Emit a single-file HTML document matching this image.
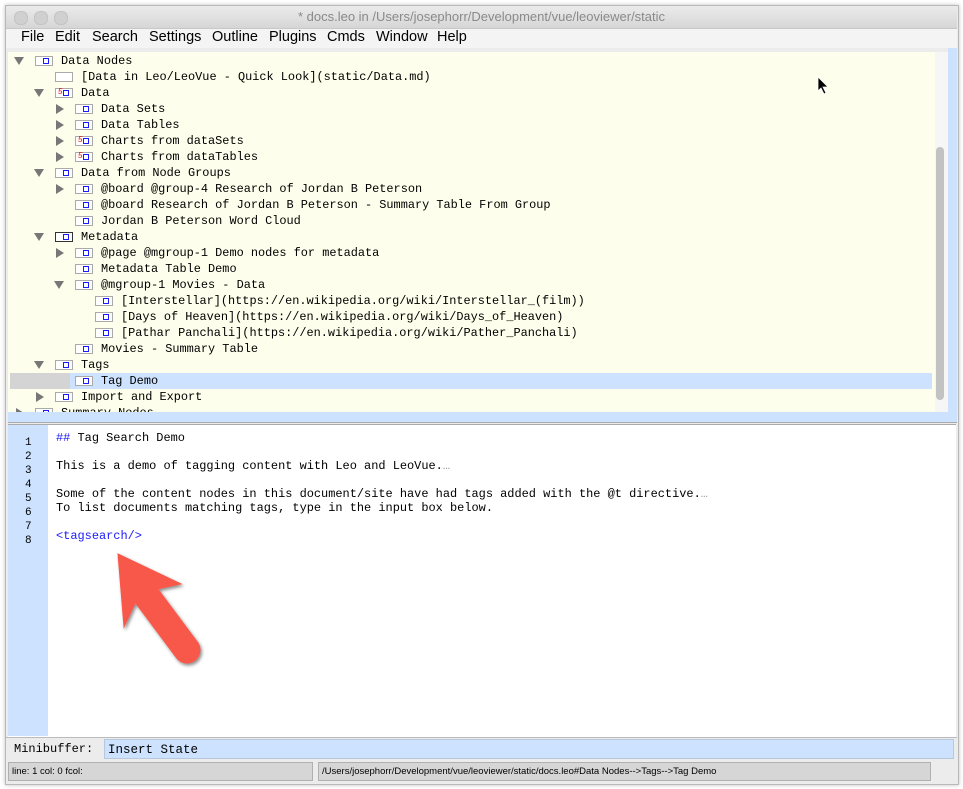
<!DOCTYPE html>
<html><head><meta charset="utf-8"><style>
body{margin:0;width:963px;height:789px;background:#fff;position:relative;overflow:hidden;font-family:"Liberation Sans",sans-serif}
.a{position:absolute}
.win{left:5px;top:5px;width:952px;height:778px;border:1px solid #b8b8b8;background:#ececec;box-shadow:0 0 4px rgba(0,0,0,.25)}
.title{left:6px;top:6px;width:951px;height:22px;background:linear-gradient(#ebebeb,#d6d6d6);border-bottom:1px solid #c8c8c8;text-align:center;font-size:13px;line-height:22px;color:#8a8a8a}
.dot{width:12px;height:12px;border-radius:6px;background:#d0d0d0;border:1px solid #c4c4c4;top:11px}
.menu{left:6px;top:29px;width:951px;height:19px;background:#f4f4f4;font-size:14.5px;line-height:17px}
.menu span{position:absolute;top:0}
.tree{left:8px;top:52px;width:940px;height:360px;background:#fefeec;overflow:hidden}
.row{position:absolute;left:0;height:16px;width:930px;font-family:"Liberation Mono",monospace;font-size:11.9px;line-height:17px;color:#000}
.row .t{position:absolute;white-space:pre}
.tri{position:absolute;width:0;height:0}
.dn{border-left:5px solid transparent;border-right:5px solid transparent;border-top:8px solid #777;top:4px}
.rt{border-top:5px solid transparent;border-bottom:5px solid transparent;border-left:8px solid #777;top:3px}
.ic{position:absolute;top:3px;width:16px;height:8px;border:1px solid #aaa;background:#fff}
.ic.dk{border-color:#333}
.ic i{position:absolute;right:3px;top:1px;width:4px;height:4px;border:1px solid #1a1aff}
.ic b{position:absolute;left:2px;top:-2px;font-size:8px;line-height:10px;color:#e00;font-weight:normal;font-family:"Liberation Sans",sans-serif;font-style:italic}
.body{left:8px;top:424px;width:948px;height:312px;background:#fff;border-top:1px solid #aaa}
.gut{left:8px;top:425px;width:40px;height:311px;background:#cce2fe}
.ln{position:absolute;left:25px;font-family:"Liberation Mono",monospace;font-size:11px}
.bt{position:absolute;left:56px;font-family:"Liberation Mono",monospace;font-size:11.95px;white-space:pre;line-height:14px}
</style></head><body>
<div class="a win"></div>
<div class="a title">* docs.leo in /Users/josephorr/Development/vue/leoviewer/static</div>
<div class="a dot" style="left:14px"></div><div class="a dot" style="left:34px"></div><div class="a dot" style="left:54px"></div>
<div class="a menu">
<span style="left:15px">File</span><span style="left:49px">Edit</span><span style="left:86px">Search</span><span style="left:143px">Settings</span><span style="left:206px">Outline</span><span style="left:263px">Plugins</span><span style="left:321px">Cmds</span><span style="left:370px">Window</span><span style="left:431px">Help</span>
</div>
<div class="a" style="left:948px;top:48px;width:9px;height:374px;background:#cce2fe"></div>
<div class="a" style="left:8px;top:412px;width:949px;height:10px;background:#cce2fe;border-bottom:1px solid #aaa"></div>
<div class="a tree" id="tree">
<div class="a" style="left:927px;top:0;width:14px;height:360px;background:#f6f6f6"></div>
<div class="a" style="left:928px;top:95px;width:8px;height:253px;border-radius:4px;background:#c2c2c2"></div>
</div>
<script>
var rows=[[0,'d','b','Data Nodes'],[1,'','e','[Data in Leo/LeoVue - Quick Look](static/Data.md)'],[1,'d','c','Data'],[2,'r','b','Data Sets'],[2,'r','b','Data Tables'],[2,'r','c','Charts from dataSets'],[2,'r','c','Charts from dataTables'],[1,'d','b','Data from Node Groups'],[2,'r','b','@board @group-4 Research of Jordan B Peterson'],[2,'','b','@board Research of Jordan B Peterson - Summary Table From Group'],[2,'','b','Jordan B Peterson Word Cloud'],[1,'d','k','Metadata'],[2,'r','b','@page @mgroup-1 Demo nodes for metadata'],[2,'','b','Metadata Table Demo'],[2,'d','b','@mgroup-1 Movies - Data'],[3,'','b','[Interstellar](https://en.wikipedia.org/wiki/Interstellar_(film))'],[3,'','b','[Days of Heaven](https://en.wikipedia.org/wiki/Days_of_Heaven)'],[3,'','b','[Pathar Panchali](https://en.wikipedia.org/wiki/Pather_Panchali)'],[2,'','b','Movies - Summary Table'],[1,'d','b','Tags'],[2,'','b','Tag Demo'],[1,'r','b','Import and Export'],[0,'r','b','Summary Nodes']];
var h='';rows.forEach(function(r,i){var L=r[0],top=1+16*i,x=20*L;var sel=i==20;
h+='<div class="row" style="top:'+top+'px">';
if(sel)h+='<div class="a" style="left:2px;top:0;width:60px;height:16px;background:#d4d4d4"></div><div class="a" style="left:62px;top:0;width:862px;height:16px;background:#cce2fe"></div>';
if(r[1])h+='<div class="tri '+(r[1]=='d'?'dn':'rt')+'" style="left:'+(r[1]=='d'?6+x:8+x)+'px"></div>';
var ic='<div class="ic'+(r[2]=='k'?' dk':'')+'" style="left:'+(27+x)+'px">';
if(r[2]!='e')ic+='<i></i>';if(r[2]=='c')ic+='<b>5</b>';ic+='</div>';h+=ic;
h+='<span class="t" style="left:'+(53+x)+'px">'+r[3]+'</span></div>';});
document.getElementById('tree').insertAdjacentHTML('beforeend',h);
</script>
<div class="a body"></div>
<div class="a gut"></div>
<div class="ln" style="top:437px">1</div><div class="ln" style="top:451px">2</div><div class="ln" style="top:465px">3</div><div class="ln" style="top:479px">4</div><div class="ln" style="top:493px">5</div><div class="ln" style="top:507px">6</div><div class="ln" style="top:521px">7</div><div class="ln" style="top:535px">8</div>
<div class="bt" style="top:431px"><span style="color:#1a1aff">##</span> Tag Search Demo

This is a demo of tagging content with Leo and LeoVue.<span style="color:#999">…</span>

Some of the content nodes in this document/site have had tags added with the @t directive.<span style="color:#999">…</span>
To list documents matching tags, type in the input box below.

<span style="color:#1a1aff">&lt;tagsearch/&gt;</span></div>
<svg class="a" style="left:0;top:0" width="963" height="789">
<defs><filter id="s" filterUnits="userSpaceOnUse" x="90" y="530" width="150" height="160"><feDropShadow dx="1.5" dy="2" stdDeviation="1.5" flood-opacity=".45"/></filter></defs>
<g filter="url(#s)" fill="#f7584a" stroke="#f7584a">
<polygon points="118,554 181,584 157,589 136,601 124,627" stroke-width="1"/>
<line x1="146" y1="595" x2="187" y2="650" stroke-width="27" stroke-linecap="round"/>
</g>
<path d="M818 77 L818 91 L821 88 L824 94 L826 93 L823 87 L828 87 Z" fill="#000" stroke="#fff" stroke-width=".8"/>
</svg>
<div class="a" style="left:6px;top:737px;width:951px;height:46px;background:#ececec;border-top:1px solid #bbb"></div>
<div class="a" style="left:14px;top:742px;font-family:'Liberation Mono',monospace;font-size:12px">Minibuffer:</div>
<div class="a" style="left:104px;top:739px;width:850px;height:20px;background:#cce2fe;border:1px solid #b8c8dc;font-family:'Liberation Mono',monospace;font-size:12.5px;line-height:20px;box-sizing:border-box;padding-left:3px">Insert State</div>
<div class="a" style="left:8px;top:762px;width:305px;height:19px;background:#d6d6d6;border:1px solid #b0b0b0;box-sizing:border-box;font-size:9.5px;line-height:17px;padding-left:3px">line: 1 col: 0 fcol:</div>
<div class="a" style="left:318px;top:762px;width:613px;height:19px;background:#d6d6d6;border:1px solid #b0b0b0;box-sizing:border-box;font-size:9.5px;line-height:17px;padding-left:3px">/Users/josephorr/Development/vue/leoviewer/static/docs.leo#Data Nodes--&gt;Tags--&gt;Tag Demo</div>
</body></html>
